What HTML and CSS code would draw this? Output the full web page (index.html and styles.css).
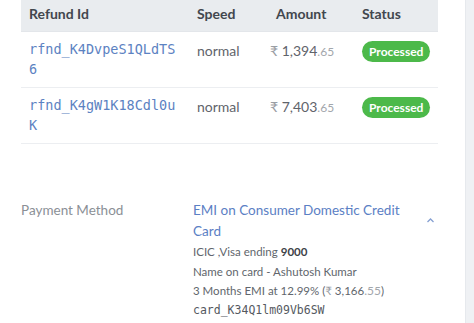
FILE: index.html
```html
<!DOCTYPE html>
<html>
<head>
<meta charset="utf-8">
<link rel="stylesheet" href="styles.css">
</head>
<body>
<div class="page">
  <main class="content">
    <div class="table">
      <div class="row head">
        <div class="cell">Refund Id</div>
        <div class="cell">Speed</div>
        <div class="cell">Amount</div>
        <div class="cell">Status</div>
      </div>
      <div class="row">
        <div class="cell id">rfnd_K4DvpeS1QLdTS6</div>
        <div class="cell">normal</div>
        <div class="cell amt"><span class="cur">₹</span> 1,394<span class="dec">.65</span></div>
        <div class="cell"><span class="badge">Processed</span></div>
      </div>
      <div class="row">
        <div class="cell id">rfnd_K4gW1K18Cdl0uK</div>
        <div class="cell">normal</div>
        <div class="cell amt"><span class="cur">₹</span> 7,403<span class="dec">.65</span></div>
        <div class="cell"><span class="badge">Processed</span></div>
      </div>
    </div>
    <div class="detail">
      <div class="label">Payment Method</div>
      <div class="value">
        <div class="method">EMI on Consumer Domestic Credit Card</div>
        <div class="sub">ICIC ,Visa ending <b>9000</b></div>
        <div class="sub">Name on card - Ashutosh Kumar</div>
        <div class="sub">3 Months EMI at 12.99% (<span class="cur">₹</span> 3,166<span class="dec">.55</span>)</div>
        <div class="sub mono">card_K34Q1lm09Vb6SW</div>
      </div>
      <div class="chev">
        <svg width="9" height="6" viewBox="0 0 9 6"><path d="M1.5 5 L4.5 2 L7.5 5" fill="none" stroke="#86a0d2" stroke-width="1.3"/></svg>
      </div>
    </div>
  </main>
  <aside class="side"></aside>
</div>
</body>
</html>
```
FILE: styles.css
```css
* { box-sizing: border-box; }
html, body { margin: 0; padding: 0; background: #fff; }
body { font-family: Lato, "Open Sans", sans-serif; color: #5f646b; }
.page { display: flex; height: 323px; overflow: hidden; }
.content { width: 438px; padding-left: 21px; }
.side { margin-left: 27px; flex: 1; background: #eff1f4; border-left: 1px solid #e6e9ed; }
.table { width: 417px; }
.row { display: grid; grid-template-columns: 168px 79px 86px 84px; border-bottom: 1px solid #eceef1; }
.row.head { background: #e9ecef; height: 32px; border-bottom: 1px solid #e3e6ea; }
.cell { padding: 0 8px; font-size: 14px; line-height: 20px; white-space: nowrap; }
.head .cell { font-weight: 700; color: #42474e; padding-top: 4px; font-size: 14px; }
.row:not(.head) { padding: 8px 0 8px; }
.row:not(.head) .cell { padding-top: 1px; }
.id { font-family: "DejaVu Sans Mono", monospace; font-size: 13.5px; color: #5c82c2; white-space: normal; word-break: break-all; padding-top: 0 !important; line-height: 19.5px; }
.amt { padding-left: 2px; }
.cur { color: #9a9ea4; }
.dec { color: #a2a6ab; font-size: 12px; }
.badge { display: inline-block; background: #4cb94a; color: #fff; font-weight: 700; font-size: 12px; line-height: 21px; padding: 0 7px; border-radius: 11px; }
.detail { display: flex; margin-top: 56px; }
.label { width: 172px; font-size: 13.5px; color: #8b9096; line-height: 20px; }
.value { width: 227px; }
.method { color: #5b80c4; font-size: 13.5px; line-height: 21px; }
.sub { font-size: 11.5px; line-height: 19.5px; color: #61666c; }
.sub b { color: #3d4248; }
.mono { font-family: "DejaVu Sans Mono", monospace; font-size: 11.5px; color: #55595f; }
.chev { padding-top: 7px; padding-left: 6px; }
```
